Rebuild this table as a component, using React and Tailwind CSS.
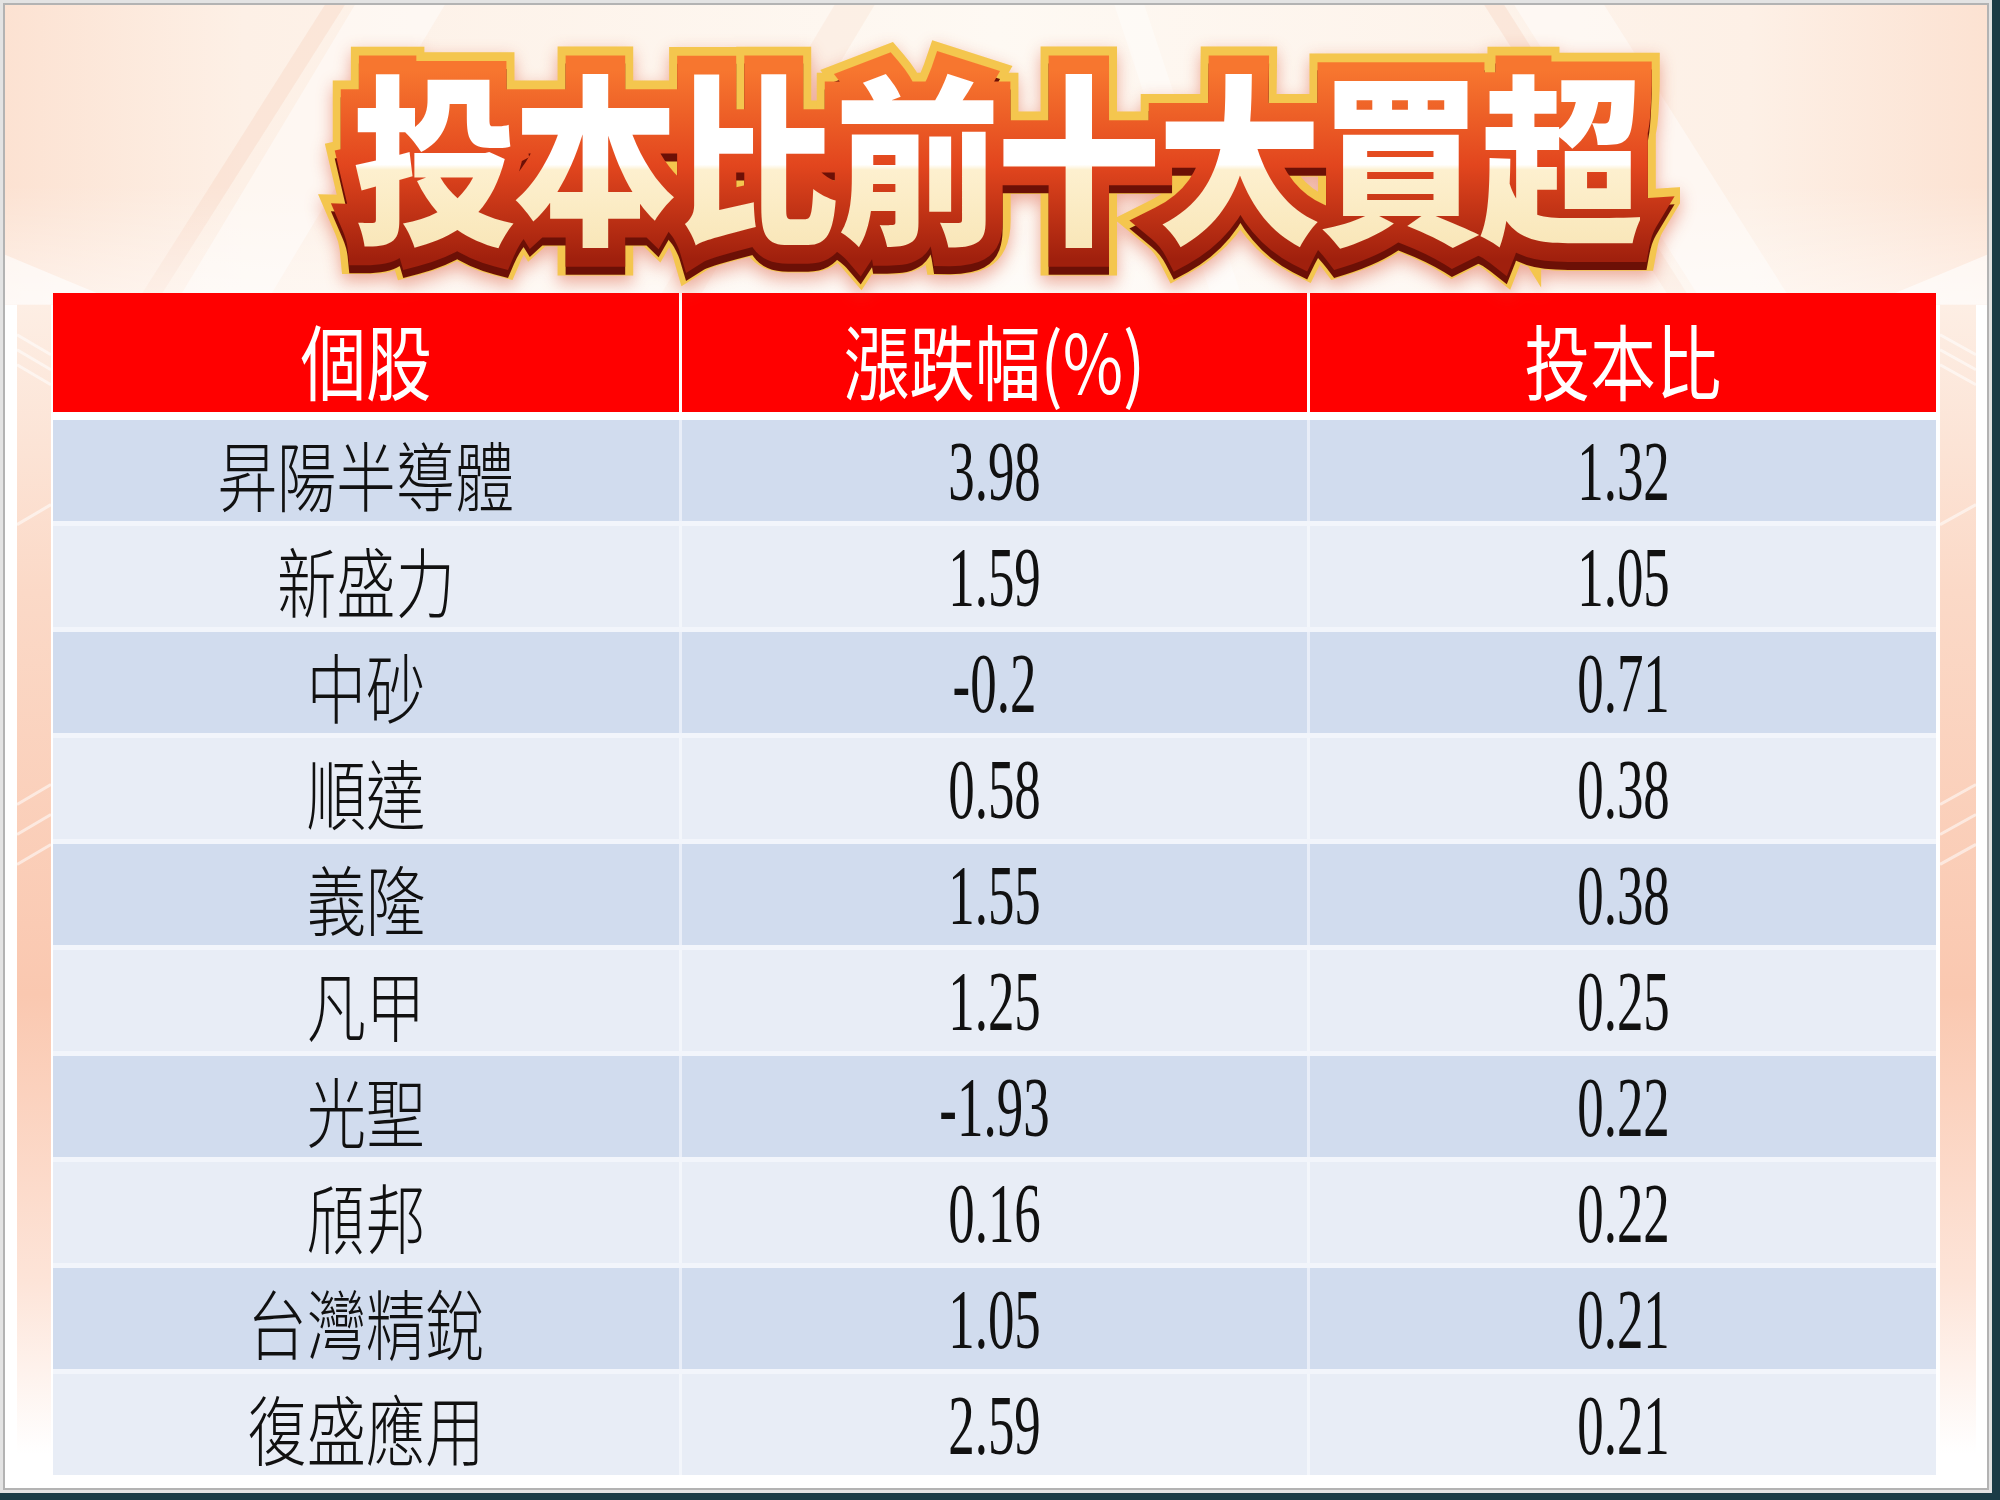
import React from "react";

const rows = [
  ["昇陽半導體", "3.98", "1.32"],
  ["新盛力", "1.59", "1.05"],
  ["中砂", "-0.2", "0.71"],
  ["順達", "0.58", "0.38"],
  ["義隆", "1.55", "0.38"],
  ["凡甲", "1.25", "0.25"],
  ["光聖", "-1.93", "0.22"],
  ["頎邦", "0.16", "0.22"],
  ["台灣精銳", "1.05", "0.21"],
  ["復盛應用", "2.59", "0.21"],
];

const TITLE = "投本比前十大買超";

// soft peach rays + side strips behind the card content
const Backdrop = () => (
  <svg className="absolute inset-0 w-full h-full" viewBox="0 0 1983 1484" preserveAspectRatio="none">
    <defs>
      <linearGradient id="topbg" x1="0" y1="0" x2="1" y2="0">
        <stop offset="0" stopColor="#fce2d2" />
        <stop offset="0.12" stopColor="#fdf0e6" />
        <stop offset="0.5" stopColor="#fef9f3" />
        <stop offset="0.88" stopColor="#fdf0e6" />
        <stop offset="1" stopColor="#fce2d2" />
      </linearGradient>
      <linearGradient id="fade" x1="0" y1="0" x2="0" y2="1">
        <stop offset="0" stopColor="#fff" stopOpacity="0" />
        <stop offset="1" stopColor="#fff" stopOpacity="0.5" />
      </linearGradient>
      <linearGradient id="strip" x1="0" y1="0" x2="0" y2="1">
        <stop offset="0" stopColor="#fdeee4" />
        <stop offset="0.25" stopColor="#fbd9c7" />
        <stop offset="0.6" stopColor="#fac8b0" />
        <stop offset="0.85" stopColor="#fde4d8" />
        <stop offset="1" stopColor="#ffffff" />
      </linearGradient>
    </defs>
    <rect x="0" y="0" width="1983" height="300" fill="url(#topbg)" />
    <polygon points="0,250 120,300 0,300" fill="#ffffff" opacity="0.6" />
    <polygon points="1983,250 1863,300 1983,300" fill="#ffffff" opacity="0.6" />
    <polygon points="320,0 340,0 150,300 130,300" fill="#f6d2bc" opacity="0.35" />
    <polygon points="350,0 440,0 260,300 170,300" fill="#ffffff" opacity="0.45" />
    <polygon points="830,0 870,0 690,300 650,300" fill="#fbe4d4" opacity="0.4" />
    <polygon points="1110,0 1140,0 1240,300 1210,300" fill="#ffffff" opacity="0.4" />
    <polygon points="1480,0 1500,0 1690,300 1670,300" fill="#f6d2bc" opacity="0.35" />
    <polygon points="1510,0 1600,0 1790,300 1700,300" fill="#ffffff" opacity="0.45" />
    <rect x="0" y="180" width="1983" height="120" fill="url(#fade)" />
    <rect x="12" y="300" width="34" height="1150" fill="url(#strip)" />
    <rect x="1936" y="300" width="36" height="1150" fill="url(#strip)" />
    <g stroke="#ffffff" strokeWidth="3" opacity="0.55">
      <line x1="12" y1="330" x2="46" y2="350" />
      <line x1="12" y1="345" x2="46" y2="365" />
      <line x1="12" y1="360" x2="46" y2="380" />
      <line x1="12" y1="520" x2="46" y2="500" />
      <line x1="12" y1="800" x2="46" y2="780" />
      <line x1="12" y1="830" x2="46" y2="810" />
      <line x1="12" y1="860" x2="46" y2="840" />
      <line x1="1936" y1="330" x2="1972" y2="350" />
      <line x1="1936" y1="345" x2="1972" y2="365" />
      <line x1="1936" y1="360" x2="1972" y2="380" />
      <line x1="1936" y1="520" x2="1972" y2="500" />
      <line x1="1936" y1="800" x2="1972" y2="780" />
      <line x1="1936" y1="830" x2="1972" y2="810" />
      <line x1="1936" y1="860" x2="1972" y2="840" />
    </g>
  </svg>
);

// outline layers are pseudo-elements so the title stays one real text
const Title = () => (
  <div className="scale-y-[1.1] [filter:drop-shadow(0_6px_8px_rgba(214,70,40,0.45))]">
    <span
      data-t={TITLE}
      className="relative isolate inline-block p-[40px] whitespace-nowrap text-[165px] leading-none font-black tracking-[-4px] font-['Noto_Sans_CJK_TC','Noto_Sans_CJK_SC',sans-serif] before:content-[attr(data-t)] before:absolute before:inset-0 before:p-[40px] before:-z-20 before:text-[#f4c64e] before:[-webkit-text-stroke:50px_#f4c64e] after:content-[attr(data-t)] after:absolute after:inset-0 after:p-[40px] after:-z-10 after:translate-y-[7px] after:text-[#6c1006] after:[-webkit-text-stroke:34px_#6c1006]"
    >
      <span
        data-t={TITLE}
        className="relative isolate block before:content-[attr(data-t)] before:absolute before:-inset-[40px] before:p-[40px] before:-z-10 before:text-transparent before:[-webkit-text-stroke:34px_transparent] before:bg-[image:linear-gradient(180deg,#f7762f_0%,#f7762f_20%,#e2461e_55%,#a0200d_90%)] before:[-webkit-background-clip:text] before:[background-clip:text]"
      >
        <span className="relative text-transparent bg-[image:linear-gradient(180deg,#ffffff_0%,#ffffff_55%,#fdf0cf_57%,#f7e2ae_100%)] [-webkit-background-clip:text] [background-clip:text]">
          {TITLE}
        </span>
      </span>
    </span>
  </div>
);

export default function App() {
  return (
    <div className="w-[2000px] h-[1500px] bg-[#1b3c46]">
      <div className="w-[1992px] h-[1493px] bg-[#e3e3e3] p-[3px]">
        <div className="relative h-full border-2 border-[#b3b3b3] bg-white overflow-hidden">
          <Backdrop />
          <div className="relative">
            {/* title */}
            <div className="h-[288px] flex justify-center items-center pt-[4px]">
              <Title />
            </div>

            {/* table */}
            <div className="ml-[48px] w-[1883px]">
              <div className="grid grid-cols-3 gap-x-[3px] h-[119px] bg-white">
                {["個股", "漲跌幅(%)", "投本比"].map((h) => (
                  <div key={h} className="bg-[#ff0000] flex items-center justify-center pt-[12px]">
                    <span className="inline-block scale-x-[0.8] text-white text-[82px] leading-none font-['Noto_Sans_CJK_TC','Noto_Sans_CJK_SC',sans-serif]">
                      {h}
                    </span>
                  </div>
                ))}
              </div>
              <div className="mt-[8px] flex flex-col gap-y-[5px] bg-[#f2f5fb]">
                {rows.map((r, i) => (
                  <div
                    key={r[0]}
                    className={`grid grid-cols-3 gap-x-[3px] h-[101px] ${
                      i % 2 === 0 ? "bg-[#e9eef8]" : "bg-[#f3f6fb]"
                    }`}
                  >
                    <div className={`flex items-center justify-center pt-[4px] ${i % 2 === 0 ? "bg-[#d1dcee]" : "bg-[#e8edf6]"}`}>
                      <span className="inline-block scale-x-[0.78] text-[#111] text-[76px] leading-none font-light font-['Noto_Sans_CJK_TC','Noto_Sans_CJK_SC',sans-serif]">
                        {r[0]}
                      </span>
                    </div>
                    {[r[1], r[2]].map((v, j) => (
                      <div key={j} className={`flex items-center justify-center pt-[2px] ${i % 2 === 0 ? "bg-[#d1dcee]" : "bg-[#e8edf6]"}`}>
                        <span className="inline-block scale-x-[0.63] text-[#111] text-[84px] leading-none font-['Liberation_Serif',serif]">
                          {v}
                        </span>
                      </div>
                    ))}
                  </div>
                ))}
              </div>
            </div>
          </div>
        </div>
      </div>
    </div>
  );
}
